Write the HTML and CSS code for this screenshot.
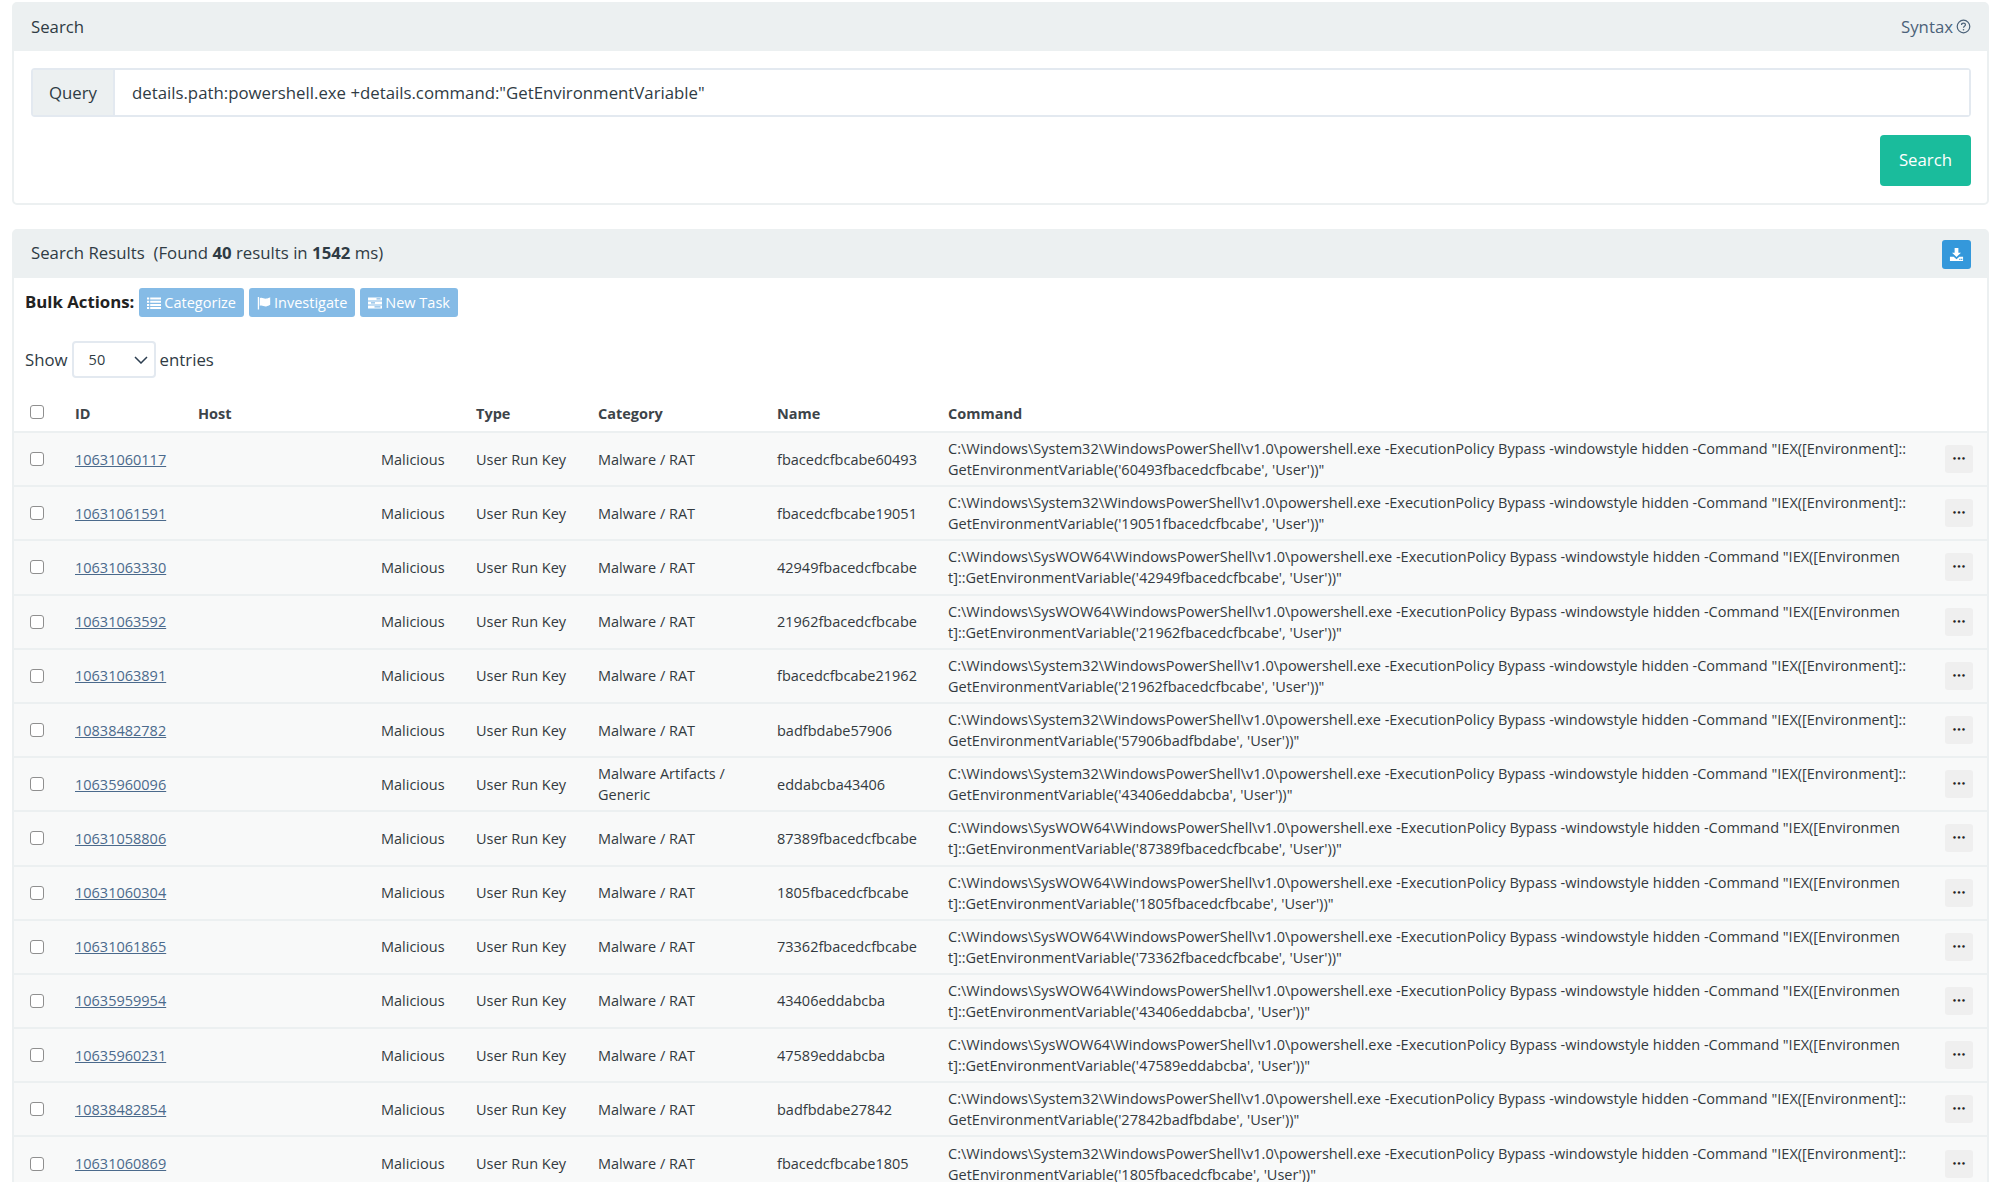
FILE: index.html
```html
<!DOCTYPE html>
<html lang="en">
<head>
<meta charset="utf-8">
<title>Search</title>
<link rel="stylesheet" href="styles.css">
</head>
<body>
<div class="page">
  <section class="panel panel-search">
    <header class="panel-head">
      <span>Search</span>
      <a class="syntax" href="#">Syntax
        <svg class="help" viewBox="0 0 16 16" width="15" height="15"><circle cx="8" cy="8" r="6.7" fill="none" stroke="currentColor" stroke-width="1.3"/><path d="M5.9 6.3c0-1.2 1-1.9 2.1-1.9s2.1.7 2.1 1.8c0 1.7-2.1 1.6-2.1 3.2" fill="none" stroke="currentColor" stroke-width="1.3"/><circle cx="8" cy="11.5" r=".85" fill="currentColor"/></svg>
      </a>
    </header>
    <div class="search-body">
      <div class="input-group">
        <span class="addon">Query</span>
        <input class="query" type="text" value='details.path:powershell.exe +details.command:"GetEnvironmentVariable"'>
      </div>
      <div class="search-actions"><button class="btn-search" type="button">Search</button></div>
    </div>
  </section>

  <section class="panel panel-results">
    <header class="panel-head">
      <span>Search Results&nbsp; (Found <b>40</b> results in <b>1542</b> ms)</span>
      <button class="btn-download" type="button" aria-label="Download">
        <svg viewBox="0 0 16 16" width="15" height="15"><path fill="#fff" d="M6 1h4v5h2.8L8 10.6 3.2 6H6z"/><path fill="#fff" d="M1 10.5h4l3 2.6 3-2.6h4V15H1z"/><path fill="#3498db" d="M11 12.6h1.2v1.2H11zM13 12.6h1.2v1.2H13z"/></svg>
      </button>
    </header>
    <div class="results-body">
      <div class="bulk">
        <strong class="bulk-label">Bulk Actions:</strong>
        <button class="btn-bulk" type="button"><svg viewBox="0 0 14 14" width="14" height="14"><path fill="#fff" d="M0 1.5h2.2v2H0zM3.2 1.5H14v2H3.2zM0 4.7h2.2v2H0zM3.2 4.7H14v2H3.2zM0 7.9h2.2v2H0zM3.2 7.9H14v2H3.2zM0 11.1h2.2v2H0zM3.2 11.1H14v2H3.2z"/></svg>Categorize</button>
        <button class="btn-bulk" type="button"><svg viewBox="0 0 14 14" width="14" height="14"><path fill="#fff" d="M.8 1h1.3v12.5H.8zM2.8 2.2C5 .9 7 3 9.2 2.6c1.4-.2 2.9-.9 4-1.4v7.6c-1.1.7-2.5 1.4-4 1.6-2.3.3-4.2-1.7-6.4-.6z"/></svg>Investigate</button>
        <button class="btn-bulk" type="button"><svg viewBox="0 0 14 14" width="14" height="14"><path fill="#fff" d="M0 1.5h14v3H0zM0 5.5h14v3H0zM0 9.5h14v3H0z"/><path fill="#85bbe6" d="M8.5 2.3h4v1.3h-4zM3 6.3h4v1.3H3zM6.5 10.3h6v1.3h-6z"/></svg>New Task</button>
      </div>
      <div class="length">
        <span>Show</span>
        <span class="select-wrap">
          <select class="length-select"><option>50</option></select>
          <svg class="chevron" viewBox="0 0 14 8" width="14" height="8"><path d="M1 1l6 6 6-6" fill="none" stroke="#2c3e50" stroke-width="1.5"/></svg>
        </span>
        <span>entries</span>
      </div>
      <table class="results">
        <colgroup>
          <col class="c-check"><col class="c-id"><col class="c-host"><col class="c-status"><col class="c-type"><col class="c-cat"><col class="c-name"><col class="c-cmd"><col class="c-act">
        </colgroup>
        <thead>
          <tr><th><input class="check" type="checkbox"></th><th>ID</th><th>Host</th><th></th><th>Type</th><th>Category</th><th>Name</th><th>Command</th><th></th></tr>
        </thead>
        <tbody>
          <tr><td><input class="check" type="checkbox"></td><td><a href="#">10631060117</a></td><td></td><td>Malicious</td><td>User Run Key</td><td>Malware / RAT</td><td>fbacedcfbcabe60493</td><td class="cmd">C:\Windows\System32\WindowsPowerShell\v1.0\powershell.exe -ExecutionPolicy Bypass -windowstyle hidden -Command "IEX([Environment]::GetEnvironmentVariable('60493fbacedcfbcabe', 'User'))"</td><td><button class="more" type="button">•••</button></td></tr>
          <tr><td><input class="check" type="checkbox"></td><td><a href="#">10631061591</a></td><td></td><td>Malicious</td><td>User Run Key</td><td>Malware / RAT</td><td>fbacedcfbcabe19051</td><td class="cmd">C:\Windows\System32\WindowsPowerShell\v1.0\powershell.exe -ExecutionPolicy Bypass -windowstyle hidden -Command "IEX([Environment]::GetEnvironmentVariable('19051fbacedcfbcabe', 'User'))"</td><td><button class="more" type="button">•••</button></td></tr>
          <tr><td><input class="check" type="checkbox"></td><td><a href="#">10631063330</a></td><td></td><td>Malicious</td><td>User Run Key</td><td>Malware / RAT</td><td>42949fbacedcfbcabe</td><td class="cmd">C:\Windows\SysWOW64\WindowsPowerShell\v1.0\powershell.exe -ExecutionPolicy Bypass -windowstyle hidden -Command "IEX([Environment]::GetEnvironmentVariable('42949fbacedcfbcabe', 'User'))"</td><td><button class="more" type="button">•••</button></td></tr>
          <tr><td><input class="check" type="checkbox"></td><td><a href="#">10631063592</a></td><td></td><td>Malicious</td><td>User Run Key</td><td>Malware / RAT</td><td>21962fbacedcfbcabe</td><td class="cmd">C:\Windows\SysWOW64\WindowsPowerShell\v1.0\powershell.exe -ExecutionPolicy Bypass -windowstyle hidden -Command "IEX([Environment]::GetEnvironmentVariable('21962fbacedcfbcabe', 'User'))"</td><td><button class="more" type="button">•••</button></td></tr>
          <tr><td><input class="check" type="checkbox"></td><td><a href="#">10631063891</a></td><td></td><td>Malicious</td><td>User Run Key</td><td>Malware / RAT</td><td>fbacedcfbcabe21962</td><td class="cmd">C:\Windows\System32\WindowsPowerShell\v1.0\powershell.exe -ExecutionPolicy Bypass -windowstyle hidden -Command "IEX([Environment]::GetEnvironmentVariable('21962fbacedcfbcabe', 'User'))"</td><td><button class="more" type="button">•••</button></td></tr>
          <tr><td><input class="check" type="checkbox"></td><td><a href="#">10838482782</a></td><td></td><td>Malicious</td><td>User Run Key</td><td>Malware / RAT</td><td>badfbdabe57906</td><td class="cmd">C:\Windows\System32\WindowsPowerShell\v1.0\powershell.exe -ExecutionPolicy Bypass -windowstyle hidden -Command "IEX([Environment]::GetEnvironmentVariable('57906badfbdabe', 'User'))"</td><td><button class="more" type="button">•••</button></td></tr>
          <tr><td><input class="check" type="checkbox"></td><td><a href="#">10635960096</a></td><td></td><td>Malicious</td><td>User Run Key</td><td>Malware Artifacts / Generic</td><td>eddabcba43406</td><td class="cmd">C:\Windows\System32\WindowsPowerShell\v1.0\powershell.exe -ExecutionPolicy Bypass -windowstyle hidden -Command "IEX([Environment]::GetEnvironmentVariable('43406eddabcba', 'User'))"</td><td><button class="more" type="button">•••</button></td></tr>
          <tr><td><input class="check" type="checkbox"></td><td><a href="#">10631058806</a></td><td></td><td>Malicious</td><td>User Run Key</td><td>Malware / RAT</td><td>87389fbacedcfbcabe</td><td class="cmd">C:\Windows\SysWOW64\WindowsPowerShell\v1.0\powershell.exe -ExecutionPolicy Bypass -windowstyle hidden -Command "IEX([Environment]::GetEnvironmentVariable('87389fbacedcfbcabe', 'User'))"</td><td><button class="more" type="button">•••</button></td></tr>
          <tr><td><input class="check" type="checkbox"></td><td><a href="#">10631060304</a></td><td></td><td>Malicious</td><td>User Run Key</td><td>Malware / RAT</td><td>1805fbacedcfbcabe</td><td class="cmd">C:\Windows\SysWOW64\WindowsPowerShell\v1.0\powershell.exe -ExecutionPolicy Bypass -windowstyle hidden -Command "IEX([Environment]::GetEnvironmentVariable('1805fbacedcfbcabe', 'User'))"</td><td><button class="more" type="button">•••</button></td></tr>
          <tr><td><input class="check" type="checkbox"></td><td><a href="#">10631061865</a></td><td></td><td>Malicious</td><td>User Run Key</td><td>Malware / RAT</td><td>73362fbacedcfbcabe</td><td class="cmd">C:\Windows\SysWOW64\WindowsPowerShell\v1.0\powershell.exe -ExecutionPolicy Bypass -windowstyle hidden -Command "IEX([Environment]::GetEnvironmentVariable('73362fbacedcfbcabe', 'User'))"</td><td><button class="more" type="button">•••</button></td></tr>
          <tr><td><input class="check" type="checkbox"></td><td><a href="#">10635959954</a></td><td></td><td>Malicious</td><td>User Run Key</td><td>Malware / RAT</td><td>43406eddabcba</td><td class="cmd">C:\Windows\SysWOW64\WindowsPowerShell\v1.0\powershell.exe -ExecutionPolicy Bypass -windowstyle hidden -Command "IEX([Environment]::GetEnvironmentVariable('43406eddabcba', 'User'))"</td><td><button class="more" type="button">•••</button></td></tr>
          <tr><td><input class="check" type="checkbox"></td><td><a href="#">10635960231</a></td><td></td><td>Malicious</td><td>User Run Key</td><td>Malware / RAT</td><td>47589eddabcba</td><td class="cmd">C:\Windows\SysWOW64\WindowsPowerShell\v1.0\powershell.exe -ExecutionPolicy Bypass -windowstyle hidden -Command "IEX([Environment]::GetEnvironmentVariable('47589eddabcba', 'User'))"</td><td><button class="more" type="button">•••</button></td></tr>
          <tr><td><input class="check" type="checkbox"></td><td><a href="#">10838482854</a></td><td></td><td>Malicious</td><td>User Run Key</td><td>Malware / RAT</td><td>badfbdabe27842</td><td class="cmd">C:\Windows\System32\WindowsPowerShell\v1.0\powershell.exe -ExecutionPolicy Bypass -windowstyle hidden -Command "IEX([Environment]::GetEnvironmentVariable('27842badfbdabe', 'User'))"</td><td><button class="more" type="button">•••</button></td></tr>
          <tr><td><input class="check" type="checkbox"></td><td><a href="#">10631060869</a></td><td></td><td>Malicious</td><td>User Run Key</td><td>Malware / RAT</td><td>fbacedcfbcabe1805</td><td class="cmd">C:\Windows\System32\WindowsPowerShell\v1.0\powershell.exe -ExecutionPolicy Bypass -windowstyle hidden -Command "IEX([Environment]::GetEnvironmentVariable('1805fbacedcfbcabe', 'User'))"</td><td><button class="more" type="button">•••</button></td></tr>
        </tbody>
      </table>
    </div>
  </section>
</div>
</body>
</html>
```

FILE: styles.css
```css
* { box-sizing: border-box; }
html, body { margin: 0; padding: 0; height: 1182px; overflow: hidden; background: #fff; }
body { font-family: "Open Sans", "Noto Sans", sans-serif; font-size: 14.5px; line-height: 21px; color: #333a40; }
.page { padding: 2px 11px 0 12px; display: flex; flex-direction: column; gap: 24px; }
.panel { border: 2px solid #ecf0f1; border-radius: 5px; background: #fff; }
.panel-head { height: 47px; background: #ecf0f1; display: flex; align-items: center; justify-content: space-between; padding: 0 16px 2px 17px; font-size: 16.8px; color: #2f3b44; }
.syntax { color: #4b6279; text-decoration: none; display: flex; align-items: center; gap: 3px; }
.help { color: #4b6279; }

.search-body { padding: 17px 16px 17px 17px; }
.input-group { display: flex; height: 49px; border: 2px solid #e3e9f0; border-radius: 4px; }
.addon { width: 82px; background: #ecf0f1; border-right: 2px solid #e3e9f0; display: flex; align-items: center; justify-content: center; font-size: 16.8px; color: #2f3b44; flex: none; }
.query { flex: 1; border: 0; outline: 0; padding: 0 17px; font: 16.8px "Open Sans", sans-serif; color: #2f3b44; background: #fff; min-width: 0; }
.search-actions { display: flex; justify-content: flex-end; margin-top: 18px; }
.btn-search { width: 91px; height: 51px; padding: 0 0 2px; border: 0; border-radius: 4px; background: #1abc9c; color: #fff; font: 16.8px "Open Sans", sans-serif; }

.panel-results .panel-head { padding: 0 16px 0 17px; }
.panel-results .panel-head > span { padding-bottom: 4px; }
.btn-download { width: 29px; height: 29px; padding: 0; border: 0; border-radius: 3px; background: #3498db; display: flex; align-items: center; justify-content: center; }

.bulk { display: flex; align-items: center; gap: 5px; padding: 10px 0 0 11px; height: 39px; }
.bulk-label { font-size: 16.8px; font-weight: 700; color: #222; margin: 0 0 3px; }
.btn-bulk { height: 29px; padding: 0 8px; border: 0; border-radius: 3px; background: #85bbe6; color: #fff; font: 14.5px "Open Sans", sans-serif; display: flex; align-items: center; gap: 3px; }
.length { display: flex; align-items: center; gap: 4px; padding: 24px 0 0 11px; font-size: 16.8px; color: #2f3b44; }
.select-wrap { position: relative; display: block; }
.length-select { appearance: none; display: block; width: 84px; height: 37px; padding: 0 15px; border: 2px solid #e3e9f0; border-radius: 4px; background: #fff; font: 14.5px "Open Sans", sans-serif; color: #2f3b44; }
.chevron { position: absolute; right: 8px; top: 15px; pointer-events: none; }

.results { width: 100%; table-layout: fixed; border-collapse: separate; border-spacing: 0; margin-top: 17px; }
.c-check { width: 51px; } .c-id { width: 123px; } .c-host { width: 183px; } .c-status { width: 95px; }
.c-type { width: 122px; } .c-cat { width: 179px; } .c-name { width: 171px; } .c-act { width: 62px; }
.results th { text-align: left; font-weight: 700; font-size: 14.5px; color: #3d4449; padding: 4px 10px 7px; height: 36px; vertical-align: bottom; }
.results td { padding: 5.1px 10px; border-top: 2px solid #ecf0f1; background: #f8f9f9; vertical-align: middle; }
.results td:first-child { padding: 0 0 0 16px; }
.results th:first-child { padding: 0 0 12px 16px; }
.results td a { color: #4b6a8c; text-decoration: underline; }
.cmd { word-break: break-all; }
.check { appearance: none; display: block; width: 14px; height: 14px; margin: 0; border: 1.5px solid #8f8f8f; border-radius: 3px; background: #fff; }
.more { display: block; width: 28px; height: 28px; margin-left: 10px; padding: 0; border: 0; border-radius: 3px; background: #efefef; color: #222; font: 700 7px/28px "DejaVu Sans", sans-serif; }
```
